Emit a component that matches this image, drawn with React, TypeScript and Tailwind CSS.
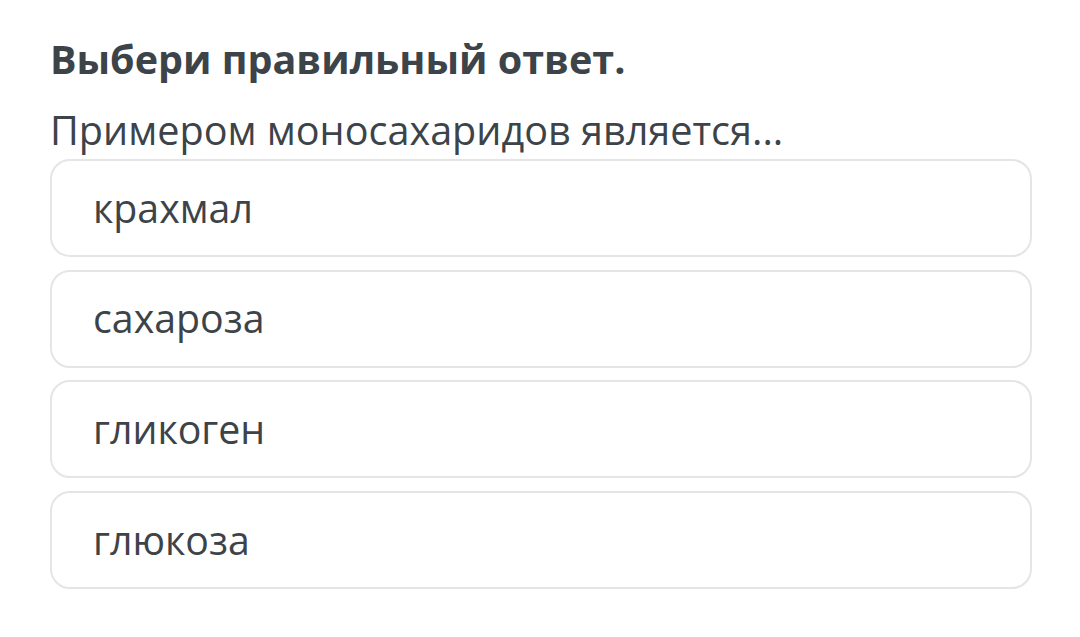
const options = ['крахмал', 'сахароза', 'гликоген', 'глюкоза'];

export default function App() {
  return (
    <div className="min-h-[637px] w-[1080px] bg-white px-[50px] pt-[33px] text-[#3c4349] font-['Open_Sans',sans-serif]">
      <h1 className="text-[39.5px] font-bold leading-[52px]">Выбери правильный ответ.</h1>
      <p className="mt-[20px] text-[39.6px] leading-[50px]">Примером моносахаридов является...</p>
      <div className="mt-[4px] flex w-[982px] flex-col gap-[12.7px]">
        {options.map((o) => (
          <div
            key={o}
            className="flex h-[98px] items-center rounded-[20px] border-2 border-[#e3e5e6] pl-[41px] text-[39.3px]"
          >
            {o}
          </div>
        ))}
      </div>
    </div>
  );
}
